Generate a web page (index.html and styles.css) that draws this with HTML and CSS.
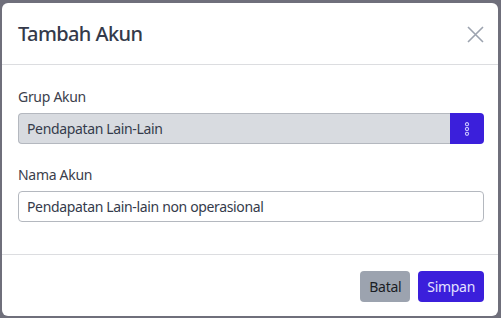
FILE: index.html
```html
<!DOCTYPE html>
<html lang="en">
  <head>
    <meta charset="UTF-8" />
    <meta name="viewport" content="width=device-width, initial-scale=1.0" />
    <title>Tambah Akun</title>
    <link rel="stylesheet" href="styles.css">
  </head>
  <body>
    <div class="modal">
      <div class="modal-header">
        <h2 class="modal-title">Tambah Akun</h2>
        <button class="btn-close" type="button">
          <svg width="17" height="17" viewBox="0 0 17 17">
            <path d="M1 1 L16 16 M16 1 L1 16" stroke="#9ca3af" stroke-width="1.6" fill="none" />
          </svg>
        </button>
      </div>

      <div class="modal-body">
        <div class="field">
          <label class="label">Grup Akun</label>
          <div class="input-group">
            <input class="input input-readonly" type="text" value="Pendapatan Lain-Lain" readonly />
            <button class="btn-pick" type="button">
              <svg width="6" height="14" viewBox="0 0 6 14">
                <circle cx="3" cy="2.2" r="1.6" stroke="#c9c4ff" stroke-width="1.1" fill="none" />
                <circle cx="3" cy="7" r="1.6" stroke="#c9c4ff" stroke-width="1.1" fill="none" />
                <circle cx="3" cy="11.8" r="1.6" stroke="#c9c4ff" stroke-width="1.1" fill="none" />
              </svg>
            </button>
          </div>
        </div>

        <div class="field">
          <label class="label">Nama Akun</label>
          <input class="input" type="text" value="Pendapatan Lain-lain non operasional" />
        </div>
      </div>

      <div class="modal-footer">
        <button class="btn btn-gray" type="button">Batal</button>
        <button class="btn btn-primary" type="button">Simpan</button>
      </div>
    </div>
  </body>
</html>
```

FILE: styles.css
```css
body {
  margin: 0;
  background: #6f6f7b;
  font-family: "Noto Sans", "Open Sans", sans-serif;
  overflow: hidden;
}

.modal {
  margin: 3px 3px 0 2px;
  height: 313px;
  background: #fff;
  border-radius: 6px;
  display: flex;
  flex-direction: column;
}

.modal-header {
  height: 61px;
  padding: 0 14px 0 16px;
  display: flex;
  align-items: center;
  justify-content: space-between;
  border-bottom: 1px solid #dcdde0;
}

.modal-title {
  margin: 0;
  font-size: 20px;
  font-weight: 500;
  color: #343a4a;
  letter-spacing: -0.6px;
}

.btn-close {
  border: none;
  background: none;
  padding: 0;
  display: flex;
  margin-top: 2px;
}

.modal-body {
  padding: 22px 14px 0 16px;
  height: 167px;
  border-bottom: 1px solid #dcdde0;
}

.field {
  margin-bottom: 21px;
}

.label {
  display: block;
  font-size: 14px;
  color: #3b404c;
  margin-bottom: 6px;
  line-height: 20px;
  letter-spacing: -0.3px;
}

.input-group {
  display: flex;
}

.input {
  box-sizing: border-box;
  width: 100%;
  height: 31px;
  border: 1px solid #b4b8bf;
  border-radius: 4px;
  padding: 0 8px;
  font-family: inherit;
  font-size: 14px;
  letter-spacing: -0.35px;
  color: #353b4b;
  background: #fff;
  outline: none;
}

.input-readonly {
  background: #d8dbe0;
  border-radius: 4px 0 0 4px;
  border-right: none;
}

.btn-pick {
  flex: none;
  width: 34px;
  height: 31px;
  border: none;
  background: #3b1fdb;
  border-radius: 0 4px 4px 0;
  display: flex;
  align-items: center;
  justify-content: center;
  padding: 0;
}

.modal-footer {
  display: flex;
  justify-content: flex-end;
  gap: 8px;
  padding: 16px 14px 0 0;
}

.btn {
  height: 31px;
  border: none;
  border-radius: 4px;
  font-family: inherit;
  font-size: 14px;
  letter-spacing: -0.3px;
  padding: 0 9px;
}

.btn-gray {
  background: #9ca3af;
  color: #1a1d24;
}

.btn-primary {
  background: #3b1fdb;
  color: #e4e2ff;
}
```
